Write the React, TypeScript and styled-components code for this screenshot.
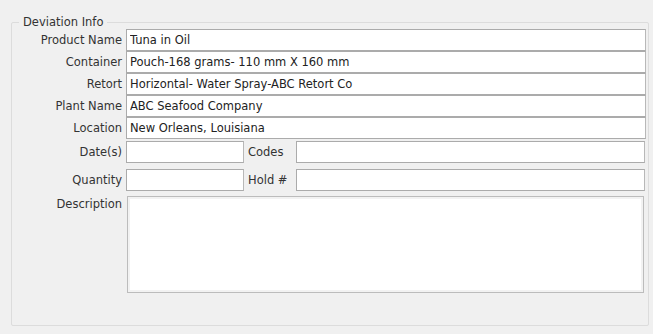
import React from 'react';
import styled, { createGlobalStyle } from 'styled-components';

const GlobalStyle = createGlobalStyle`
  html, body {
    margin: 0;
    padding: 0;
    background: #f0f0f0;
  }
  body {
    font-family: "DejaVu Sans", Verdana, sans-serif;
    font-size: 11.5px;
    color: #333;
  }
`;

const DeviationInfo = () => {
  return (
    <Page>
      <GlobalStyle />
      <GroupBox>
        <Legend>Deviation Info</Legend>
        <Stack>
          <Row>
            <Label>Product Name</Label>
            <Field readOnly defaultValue="Tuna in Oil" />
          </Row>
          <Row>
            <Label>Container</Label>
            <Field readOnly defaultValue="Pouch-168 grams- 110 mm X 160 mm" />
          </Row>
          <Row>
            <Label>Retort</Label>
            <Field readOnly defaultValue="Horizontal- Water Spray-ABC Retort Co" />
          </Row>
          <Row>
            <Label>Plant Name</Label>
            <Field readOnly defaultValue="ABC Seafood Company" />
          </Row>
          <Row>
            <Label>Location</Label>
            <Field readOnly defaultValue="New Orleans, Louisiana" />
          </Row>
        </Stack>

        <PairRow $top={2}>
          <Label>Date(s)</Label>
          <ShortField />
          <MidLabel>Codes</MidLabel>
          <Field $inset={1} />
        </PairRow>
        <PairRow $top={6}>
          <Label>Quantity</Label>
          <ShortField />
          <MidLabel>Hold #</MidLabel>
          <Field $inset={1} />
        </PairRow>

        <NotesRow>
          <Label $top>Description</Label>
          <Notes />
        </NotesRow>
      </GroupBox>
    </Page>
  );
};

const Page = styled.div`
  width: 653px;
  height: 334px;
  padding: 16px 0 0 11px;
  box-sizing: border-box;
`;

const GroupBox = styled.fieldset`
  width: 638px;
  height: 310px;
  box-sizing: border-box;
  margin: 0;
  padding: 0 2px 0 0;
  border: 1px solid #dcdcdc;
  border-radius: 2px;
`;

const Legend = styled.legend`
  margin-left: 7px;
  padding: 0 4px 0 4px;
  font-size: 11.5px;
  line-height: 13px;
  color: #333;
`;

const Stack = styled.div`
  display: flex;
  flex-direction: column;
`;

const Row = styled.div`
  display: flex;
  align-items: center;
  height: 22px;
`;

const PairRow = styled(Row)<{ $top: number }>`
  margin-top: ${(p) => p.$top}px;
`;

const Label = styled.label<{ $top?: boolean }>`
  flex: 0 0 110px;
  padding-right: 4px;
  text-align: right;
  white-space: nowrap;
  color: #333;
  align-self: ${(p) => (p.$top ? 'flex-start' : 'center')};
  margin-top: ${(p) => (p.$top ? '1px' : '0')};
`;

const MidLabel = styled.label`
  flex: 0 0 52px;
  padding-left: 4px;
  box-sizing: border-box;
  white-space: nowrap;
  color: #333;
`;

const Field = styled.input<{ $inset?: number }>`
  flex: 1;
  min-width: 0;
  height: 22px;
  box-sizing: border-box;
  margin: 0 ${(p) => p.$inset ?? 0}px 0 0;
  padding: 0 3px;
  border: 1px solid #ababab;
  border-right-color: #b8b8b8;
  background: #fff;
  font-family: "DejaVu Sans", Verdana, sans-serif;
  font-size: 11.5px;
  color: #222;
  outline: none;
`;

const ShortField = styled(Field)`
  flex: 0 0 118px;
`;

const NotesRow = styled.div`
  display: flex;
  margin-top: 5px;
`;

const Notes = styled.textarea`
  flex: 0 0 517px;
  height: 97px;
  box-sizing: border-box;
  margin: 0 0 0 1px;
  padding: 3px;
  border: 1px solid #bcbcbc;
  box-shadow: inset 0 0 0 2px #f2f2f2;
  background: #fff;
  resize: none;
  outline: none;
  font-family: "DejaVu Sans", Verdana, sans-serif;
  font-size: 11.5px;
`;

export default function App() {
  return <DeviationInfo />;
}
